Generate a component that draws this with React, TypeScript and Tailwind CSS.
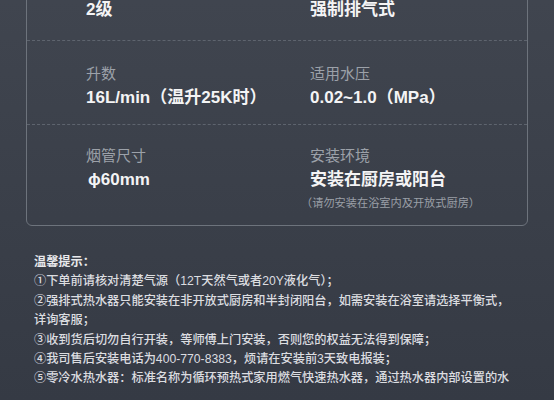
import React from 'react';

const FONT = { fontFamily: '"Liberation Sans", "Noto Sans CJK SC", sans-serif' };

type Spec = { label?: string; value: string; note?: string };

const rows: Spec[][] = [
  [{ value: '2级' }, { value: '强制排气式' }],
  [
    { label: '升数', value: '16L/min（温升25K时）' },
    { label: '适用水压', value: '0.02~1.0（MPa）' },
  ],
  [
    { label: '烟管尺寸', value: 'ϕ60mm' },
    { label: '安装环境', value: '安装在厨房或阳台', note: '（请勿安装在浴室内及开放式厨房）' },
  ],
];

const tips = [
  '①下单前请核对清楚气源（12T天然气或者20Y液化气）；',
  '②强排式热水器只能安装在非开放式厨房和半封闭阳台，如需安装在浴室请选择平衡式，',
  '详询客服；',
  '③收到货后切勿自行开装，等师傅上门安装，否则您的权益无法得到保障；',
  '④我司售后安装电话为400-770-8383，烦请在安装前3天致电报装；',
  '⑤零冷水热水器：标准名称为循环预热式家用燃气快速热水器，通过热水器内部设置的水',
];

function Cell({ spec, first }: { spec: Spec; first?: boolean }) {
  return (
    <div className={first ? 'w-[224px] shrink-0' : 'flex-1'}>
      {spec.label && <div className="mb-[3px] text-[15px] leading-[20px] text-[#9ca1a9]">{spec.label}</div>}
      <div
        className={`text-[17px] leading-[22px] text-[#f4f4f5] font-semibold ${
          spec.value.startsWith('ϕ') ? 'pl-[2px]' : ''
        }`}
      >
        {spec.value}
      </div>
      {spec.note && <div className="mt-[5px] -ml-[9px] text-[11.2px] leading-[14px] text-[#9a9fa7]">{spec.note}</div>}
    </div>
  );
}

export default function App() {
  return (
    <div className="w-[554px] h-[400px] overflow-hidden bg-gradient-to-b from-[#40454f] to-[#353a44]" style={FONT}>
      <div className="ml-[26px] w-[502px] -mt-[17px] border-[1.5px] border-[#6d737c] rounded-[6px]">
        <div className="flex pl-[59px] pt-[15px] pb-[19px] border-b border-dashed border-[#5e646e]">
          <Cell spec={rows[0][0]} first />
          <Cell spec={rows[0][1]} />
        </div>
        <div className="flex pl-[59px] pt-[23px] h-[84px] border-b border-dashed border-[#5e646e]">
          <Cell spec={rows[1][0]} first />
          <Cell spec={rows[1][1]} />
        </div>
        <div className="flex pl-[59px] pt-[21px] h-[100px]">
          <Cell spec={rows[2][0]} first />
          <Cell spec={rows[2][1]} />
        </div>
      </div>

      <div className="pl-[34px] pt-[27px] text-[12.2px] leading-[19.4px] font-medium text-[#dcdde0]">
        <div className="font-bold text-[#e8e9ec]">温馨提示：</div>
        {tips.map((t) => (
          <div key={t} className="whitespace-nowrap">
            {t}
          </div>
        ))}
      </div>
    </div>
  );
}
